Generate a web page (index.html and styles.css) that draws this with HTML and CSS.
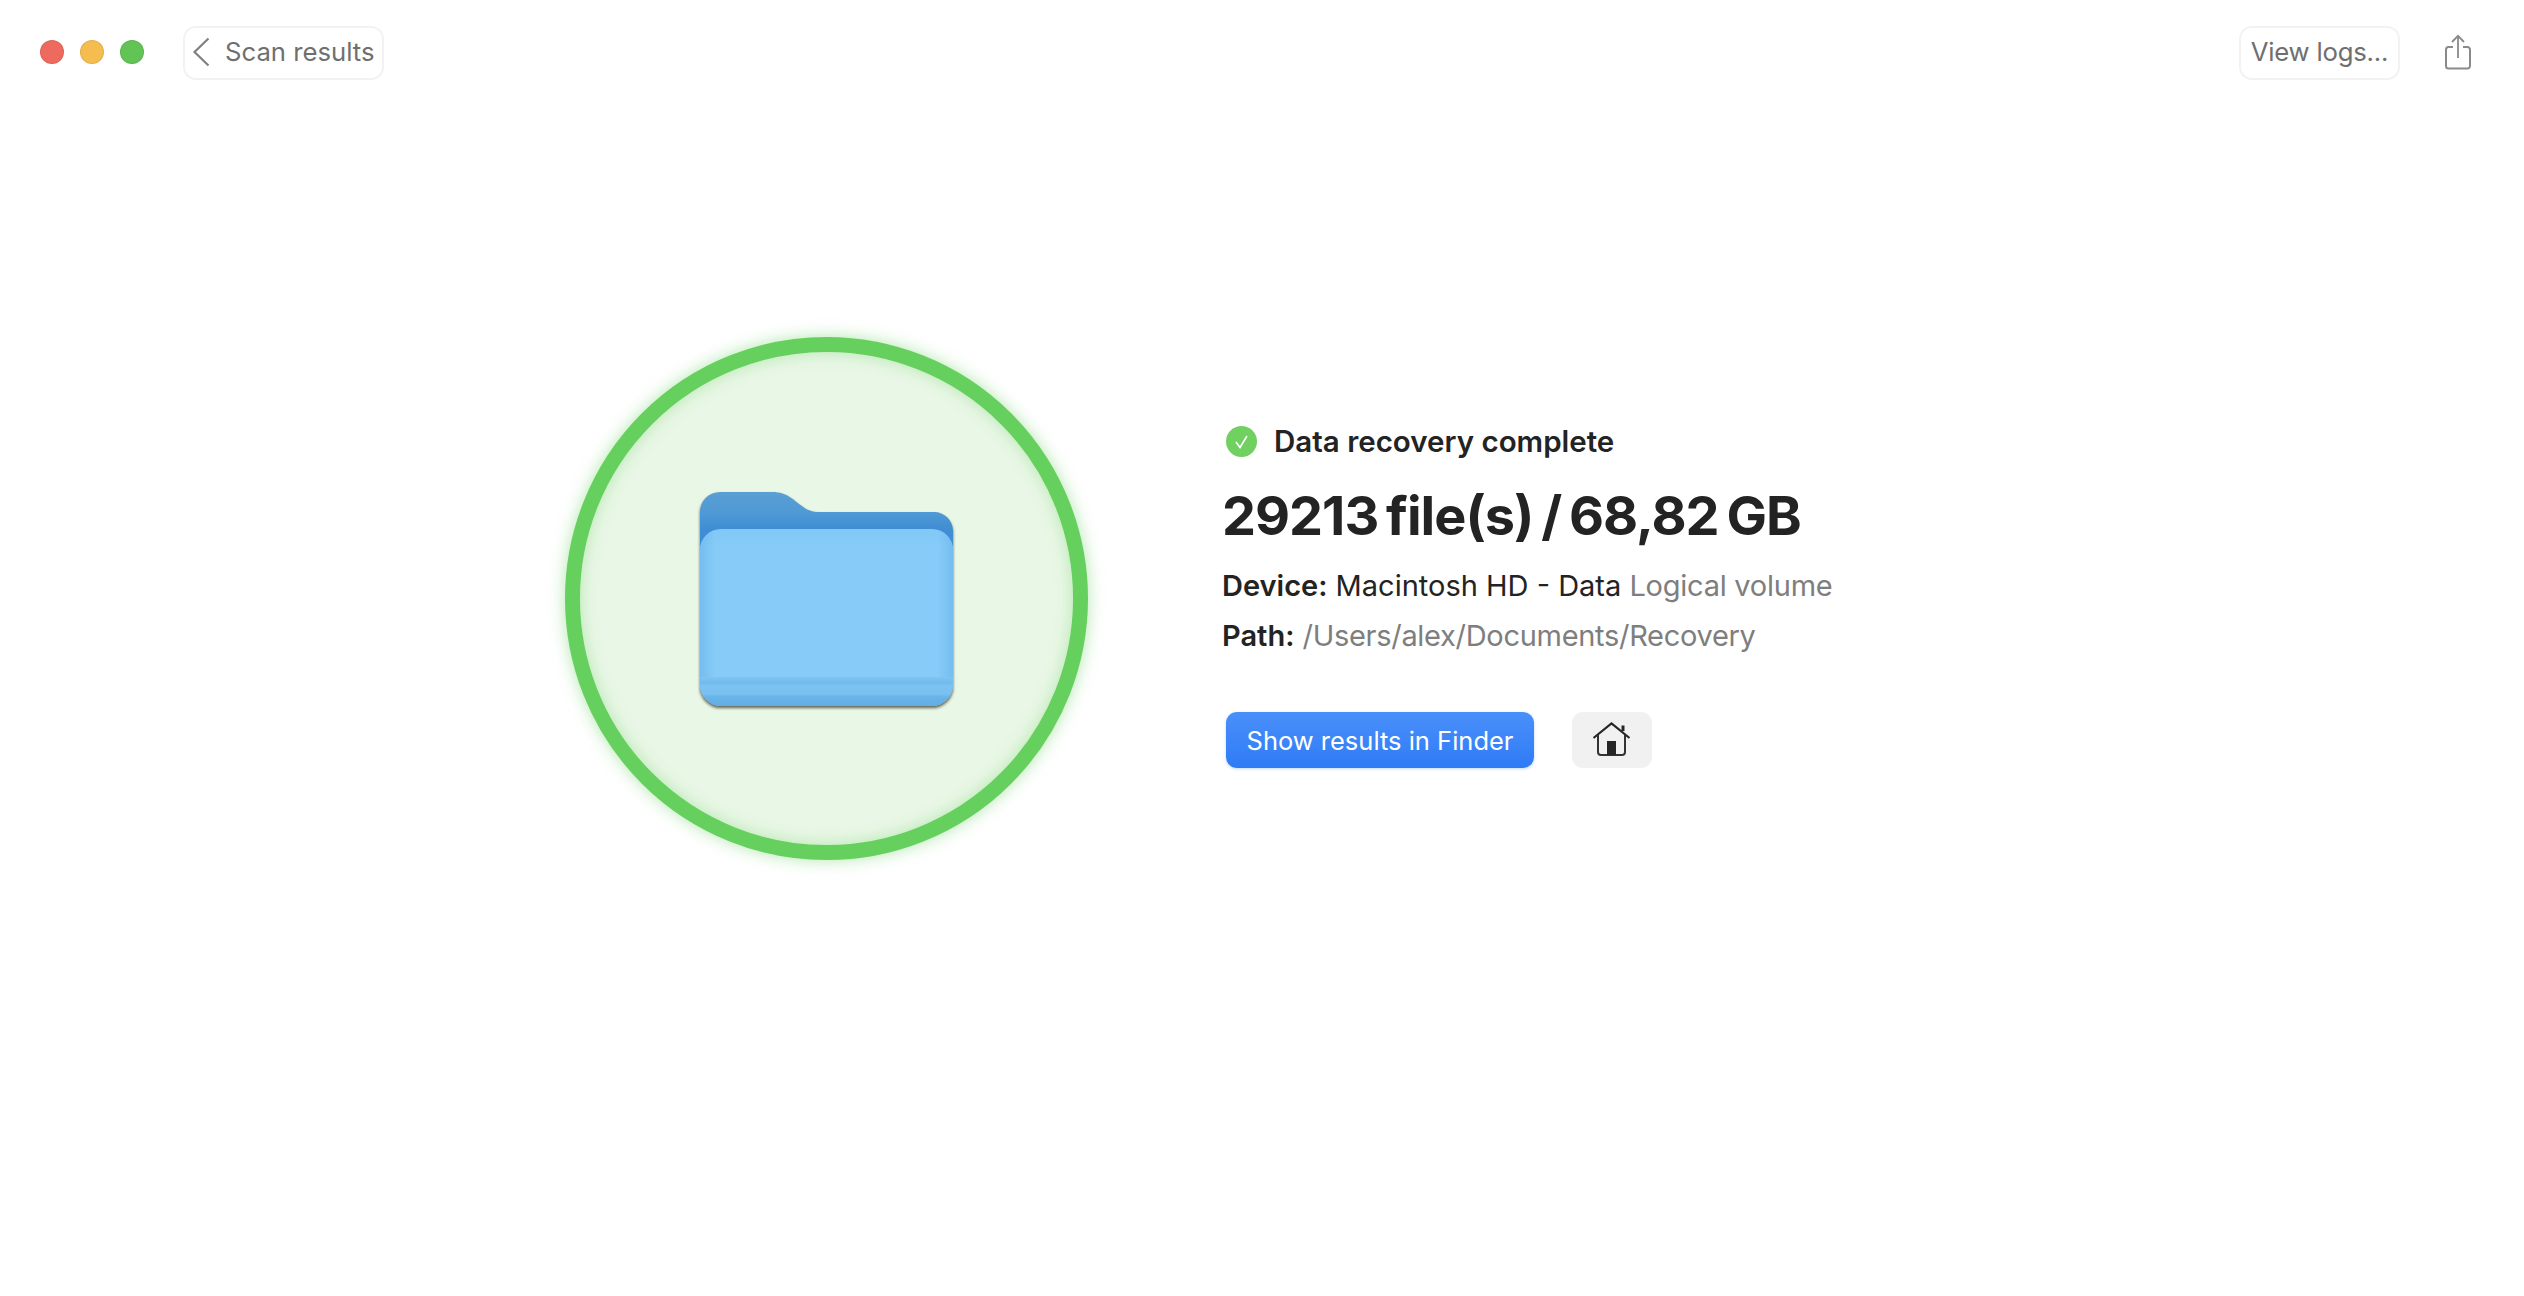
FILE: index.html
```html
<!DOCTYPE html>
<html lang="en">
<head>
<meta charset="utf-8">
<title>Data recovery complete</title>
<link rel="stylesheet" href="styles.css">
</head>
<body>
<header class="toolbar">
  <div class="lights">
    <span class="light light-red"></span>
    <span class="light light-yellow"></span>
    <span class="light light-green"></span>
  </div>
  <button class="tool-btn back-btn">
    <svg class="chevron" width="18" height="30" viewBox="0 0 18 30"><path d="M16.500 1.500 L2.500 15 L16.500 28.500" fill="none" stroke="#808080" stroke-width="2.200"/></svg>
    <span>Scan results</span>
  </button>
  <div class="toolbar-right">
    <button class="tool-btn logs-btn">View logs...</button>
    <svg class="share" width="28" height="36" viewBox="0 0 28 36"><path d="M9 13 H4.500 a2.500 2.500 0 0 0 -2.500 2.500 V32 a2.500 2.500 0 0 0 2.500 2.500 H23.500 a2.500 2.500 0 0 0 2.500 -2.500 V15.500 a2.500 2.500 0 0 0 -2.500 -2.500 H19" fill="none" stroke="#8a8a8a" stroke-width="2"/><path d="M14 24 V2 M8 8 L14 1.800 L20 8" fill="none" stroke="#8a8a8a" stroke-width="1.800"/></svg>
  </div>
</header>
<main class="result">
  <div class="ring">
    <svg class="folder" width="254" height="214" viewBox="0 0 254 214">
      <defs>
        <linearGradient id="back" x1="0" y1="0" x2="0" y2="1"><stop offset="0" stop-color="#5a9fd4"/><stop offset="0.35" stop-color="#4f99d6"/><stop offset="0.62" stop-color="#3f8dd3"/></linearGradient>
        <linearGradient id="front" x1="0" y1="0" x2="0" y2="1"><stop offset="0" stop-color="#81c8f6"/><stop offset="0.1" stop-color="#87ccf8"/><stop offset="1" stop-color="#87ccf8"/></linearGradient>
        <linearGradient id="edge" x1="0" y1="0" x2="1" y2="0"><stop offset="0" stop-color="#74bdee"/><stop offset="0.06" stop-color="#74bdee" stop-opacity="0"/><stop offset="0.94" stop-color="#74bdee" stop-opacity="0"/><stop offset="1" stop-color="#74bdee"/></linearGradient>
        <linearGradient id="band" x1="0" y1="0" x2="0" y2="1"><stop offset="0" stop-color="#7ec5f4"/><stop offset="0.2" stop-color="#71bbec"/><stop offset="0.3" stop-color="#7cc3f2"/><stop offset="0.6" stop-color="#78c0f0"/><stop offset="0.68" stop-color="#69b4e8"/><stop offset="1" stop-color="#61ade5"/></linearGradient>
        <clipPath id="face"><rect x="0" y="37" width="253" height="177" rx="21"/></clipPath>
      </defs>
      <path d="M0 60 V20 A20 20 0 0 1 20 0 H72 C88 0 94 9 102 14 C107 18 112 20 120 20 H234 A19 19 0 0 1 253 39 V60 Z" fill="url(#back)"/>
      <g clip-path="url(#face)">
        <rect y="37" width="253" height="177" fill="url(#front)"/>
        <rect y="37" width="253" height="177" fill="url(#edge)"/>
        <rect y="185" width="253" height="29" fill="url(#band)"/>
      </g>
    </svg>
  </div>
  <section class="info">
    <div class="status">
      <svg class="check" width="31" height="31" viewBox="0 0 31 31"><circle cx="15.500" cy="15.500" r="15.500" fill="#70d160"/><path d="M10 16 L14 21.500 L21 10" fill="none" stroke="#fff" stroke-width="1.600"/></svg>
      <span>Data recovery complete</span>
    </div>
    <h1 class="total">29213 file(s) / 68,82 GB</h1>
    <p class="line first"><b>Device:</b> Macintosh HD - Data <span class="muted">Logical volume</span></p>
    <p class="line"><b>Path:</b> <span class="muted tight">/Users/alex/Documents/Recovery</span></p>
    <div class="actions">
      <button class="primary">Show results in Finder</button>
      <button class="home">
        <svg width="40" height="36" viewBox="0 0 40 36"><path d="M1.500 16 L19.500 1.500 L37.500 16" fill="none" stroke="#262626" stroke-width="2.200"/><path d="M31 9 V3.500" fill="none" stroke="#262626" stroke-width="3"/><path d="M6 13 V30 a3 3 0 0 0 3 3 H30 a3 3 0 0 0 3 -3 V13" fill="none" stroke="#333" stroke-width="2"/><rect x="15" y="19" width="9" height="14" fill="#262626"/></svg>
      </button>
    </div>
  </section>
</main>
</body>
</html>
```
FILE: styles.css
```css
* { box-sizing: border-box; }
html, body { margin: 0; height: 100%; }
body {
  background: #fff;
  color: #232323;
  font-family: Inter, "Liberation Sans", sans-serif;
  overflow: hidden;
}
button { font-family: inherit; cursor: default; }

.toolbar {
  display: flex;
  align-items: center;
  height: 54px;
  margin-top: 26px;
  padding: 0 40px;
}
.lights { display: flex; gap: 16px; margin-bottom: 2px; }
.light { width: 24px; height: 24px; border-radius: 50%; border: 1px solid rgba(0,0,0,.08); }
.light-red { background: #ee6a5f; }
.light-yellow { background: #f5bd4f; }
.light-green { background: #61c454; }

.tool-btn {
  height: 54px;
  background: #fff;
  border: 2px solid #f2f2f2;
  border-radius: 13px;
  color: #6f6f6f;
  font-size: 25.700px;
  padding: 0 0 4px;
  display: flex;
  align-items: center;
}
.back-btn { margin-left: 39px; width: 201px; padding-left: 7px; gap: 15px; }
.chevron { flex: none; margin-top: 2px; }
.toolbar-right { margin-left: auto; display: flex; align-items: center; gap: 44px; margin-right: 12px; }
.logs-btn { width: 161px; justify-content: center; letter-spacing: -.2px; }
.share { display: block; margin-top: -3px; }

.result {
  display: flex;
  align-items: flex-start;
  padding: 257px 0 0 565px;
}
.ring {
  flex: none;
  width: 523px;
  height: 523px;
  border-radius: 50%;
  background: #e9f7e6;
  border: 15px solid #66d05e;
  box-shadow: 0 0 16px rgba(102,208,94,.5), inset 0 0 16px rgba(102,208,94,.4);
  display: flex;
  align-items: center;
  justify-content: center;
}
.folder { display: block; overflow: visible; filter: drop-shadow(0 2px 1.500px rgba(60,60,50,.8)); margin-top: 1px; }

.info { margin-left: 134px; padding-top: 87px; }
.status { display: flex; align-items: center; gap: 17px; margin-left: 4px; height: 34px; font-size: 29.500px; font-weight: 600; }
.check { display: block; flex: none; }
.total { margin: 25px 0 0; font-size: 54px; line-height: 66px; font-weight: 700; letter-spacing: -1px; word-spacing: -4px; }
.line { margin: 0; font-size: 29px; line-height: 50px; white-space: nowrap; }
.line b { font-weight: 600; }
.first { margin-top: 12px; }
.muted { color: #7e7e7e; letter-spacing: -.25px; }
.tight { letter-spacing: -.3px; }

.actions { display: flex; gap: 38px; margin: 51px 0 0 4px; }
.primary {
  width: 308px;
  height: 56px;
  border: 0;
  border-radius: 11px;
  background: linear-gradient(#4a90fb, #2f7bf6);
  box-shadow: 0 1px 3px rgba(47,123,246,.3);
  color: #fff;
  font-size: 25.500px;
  padding: 0;
}
.home {
  width: 80px;
  height: 56px;
  border: 0;
  border-radius: 11px;
  background: #f1f1f1;
  padding: 0;
  display: flex;
  align-items: center;
  justify-content: center;
}
```
